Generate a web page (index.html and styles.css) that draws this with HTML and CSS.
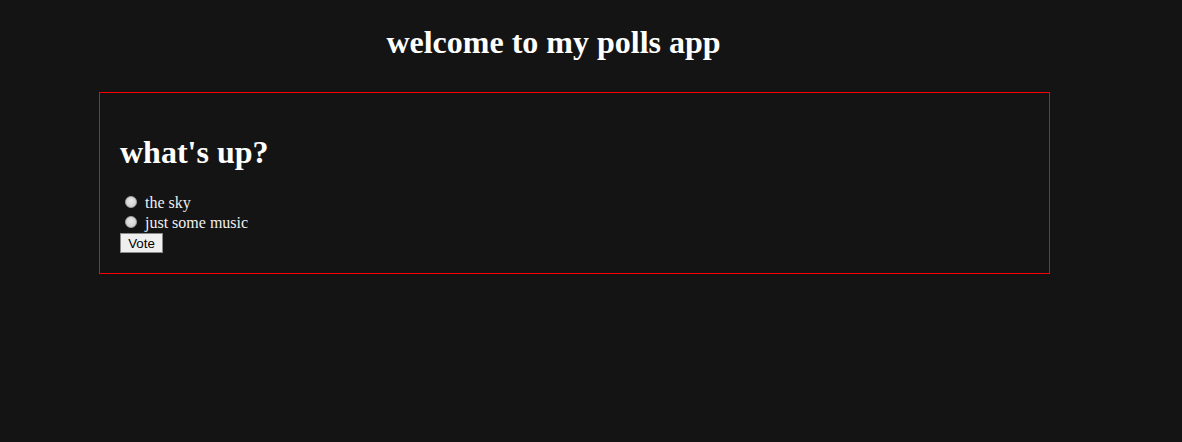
FILE: index.html
```html
<!DOCTYPE html>
<html>
<head>
<meta charset="utf-8">
<link rel="stylesheet" href="styles.css">
</head>
<body>
<h1 class="site-title">welcome to my polls app</h1>
<div class="poll-card">
  <h1 class="question">what's up?</h1>
  <form class="poll-form">
    <label class="choice"><input type="radio" name="choice" value="1">the sky</label>
    <label class="choice"><input type="radio" name="choice" value="2">just some music</label>
    <button type="button" class="vote-btn">Vote</button>
  </form>
</div>
</body>
</html>
```
FILE: styles.css
```css
html, body {
  background: #141414;
}
body {
  margin: 0;
  padding: 0 8px;
  color: #ffffff;
  font-family: "Liberation Serif", "Times New Roman", serif;
  font-size: 16px;
}
.site-title {
  font-size: 32px;
  line-height: 37px;
  font-weight: bold;
  text-align: center;
  margin: 0 75px 0 0;
  padding: 24px 0 31px;
}
.poll-card {
  margin-left: 91px;
  width: 909px;
  height: 140px;
  padding: 20px;
  border: 1px solid #ff0000;
}
.question {
  font-size: 32px;
  line-height: 37px;
  font-weight: bold;
  margin: 0;
  padding: 21px 0 22px;
}
.poll-form {
  display: flex;
  flex-direction: column;
  align-items: flex-start;
}
.choice {
  display: flex;
  align-items: center;
  height: 20px;
  line-height: 20px;
  color: #f0f0f0;
}
.choice input {
  appearance: none;
  -webkit-appearance: none;
  width: 12px;
  height: 12px;
  margin: 0 8px 2px 5px;
  border-radius: 50%;
  border: 1px solid #a8a8a8;
  background: radial-gradient(circle at 50% 40%, #e8e8e8 0%, #d6d6d6 60%, #c4c4c4 100%);
  box-sizing: border-box;
}
.vote-btn {
  font-family: "Liberation Sans", Arial, sans-serif;
  font-size: 13.33px;
  height: 20px;
  width: 43px;
  padding: 0;
  background: #efefef;
  border: 1px solid #8a8a8a;
  color: #000;
}
```
